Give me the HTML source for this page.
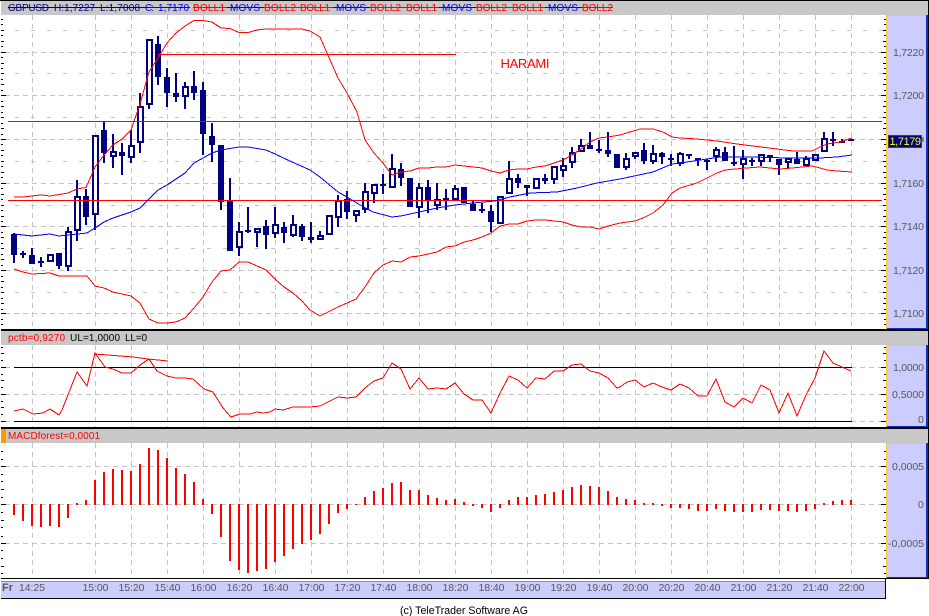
<!DOCTYPE html>
<html lang="en"><head><meta charset="utf-8"><title>GBPUSD chart</title>
<style>
html,body{margin:0;padding:0;background:#fff;width:929px;height:616px;overflow:hidden}
svg{display:block}
text{font-family:"Liberation Sans",Arial,sans-serif}
</style></head><body>
<svg xmlns="http://www.w3.org/2000/svg" width="929" height="616" viewBox="0 0 929 616">
<g shape-rendering="crispEdges">
<rect x="0" y="0" width="929" height="616" fill="#fff"/>
<!-- frames -->
<rect x="0" y="0" width="929" height="1" fill="#000"/>
<rect x="1" y="1" width="927" height="14" fill="#c8c8c8"/>
<rect x="1" y="329" width="927" height="2" fill="#000"/>
<rect x="1" y="331" width="927" height="14" fill="#c8c8c8"/>
<rect x="1" y="427" width="927" height="2" fill="#000"/>
<rect x="1" y="429" width="927" height="14" fill="#c8c8c8"/>
<rect x="1" y="429" width="5" height="14" fill="#ff9900"/>
<rect x="1" y="578" width="928" height="1" fill="#000"/>
<rect x="1" y="581" width="885" height="1" fill="#8888a0"/>
<rect x="1" y="582" width="884" height="16" fill="#ccccff"/>
<rect x="1" y="598" width="885" height="1" fill="#000"/>
<rect x="885" y="579" width="1" height="20" fill="#000"/>
<rect x="928" y="0" width="1" height="579" fill="#000"/>
<!-- right axis panels -->
<rect x="886" y="15" width="41" height="314" fill="#ccccff"/>
<rect x="886" y="345" width="41" height="82" fill="#ccccff"/>
<rect x="886" y="443" width="41" height="135" fill="#ccccff"/>
<path fill="#ffc832" d="M886 15h41v1h-41zM886 15h1v314h-1zM886 345h41v1h-41zM886 345h1v82h-1zM886 443h41v1h-41zM886 443h1v135h-1z"/>
<path fill="#1030c0" d="M926 15h2v314h-2zM887 328h41v1h-41zM926 345h2v82h-2zM887 426h41v1h-41zM926 443h2v135h-2zM887 577h41v1h-41z"/>
<!-- grid -->
<path fill="none" stroke="#c4c4c4" stroke-dasharray="5 4" d="M32.5 15V329M95.5 15V329M131.5 15V329M167.5 15V329M203.5 15V329M239.5 15V329M275.5 15V329M311.5 15V329M347.5 15V329M383.5 15V329M419.5 15V329M455.5 15V329M491.5 15V329M527.5 15V329M563.5 15V329M599.5 15V329M635.5 15V329M671.5 15V329M707.5 15V329M743.5 15V329M779.5 15V329M815.5 15V329M851.5 15V329M32.5 345V427M95.5 345V427M131.5 345V427M167.5 345V427M203.5 345V427M239.5 345V427M275.5 345V427M311.5 345V427M347.5 345V427M383.5 345V427M419.5 345V427M455.5 345V427M491.5 345V427M527.5 345V427M563.5 345V427M599.5 345V427M635.5 345V427M671.5 345V427M707.5 345V427M743.5 345V427M779.5 345V427M815.5 345V427M851.5 345V427M32.5 443V578M95.5 443V578M131.5 443V578M167.5 443V578M203.5 443V578M239.5 443V578M275.5 443V578M311.5 443V578M347.5 443V578M383.5 443V578M419.5 443V578M455.5 443V578M491.5 443V578M527.5 443V578M563.5 443V578M599.5 443V578M635.5 443V578M671.5 443V578M707.5 443V578M743.5 443V578M779.5 443V578M815.5 443V578M851.5 443V578"/>
<path fill="none" stroke="#c4c4c4" stroke-dasharray="5 4" d="M5 52.5H886M5 95.5H886M5 139.5H886M5 183.5H886M5 226.5H886M5 270.5H886M5 313.5H886M5 367.5H886M5 394.5H886M5 421.5H886M5 466.5H886M5 504.5H886M5 543.5H886"/>
<path fill="none" stroke="#c4c4c4" stroke-dasharray="4 12" d="M15 30.5H886M15 73.5H886M15 117.5H886M15 161.5H886M15 205.5H886M15 248.5H886M15 292.5H886"/>
<!-- ticks -->
<g id="t" fill="none" stroke="#000">
<path d="M1 19.5h2M1 24.5h2M1 35.5h2M1 46.5h2M1 57.5h2M1 68.5h2M1 79.5h2M1 90.5h2M1 101.5h2M1 112.5h2M1 123.5h2M1 134.5h2M1 144.5h2M1 155.5h2M1 166.5h2M1 177.5h2M1 188.5h2M1 199.5h2M1 210.5h2M1 221.5h2M1 232.5h2M1 243.5h2M1 254.5h2M1 265.5h2M1 276.5h2M1 287.5h2M1 298.5h2M1 309.5h2M1 319.5h2M1 324.5h2M1 347.5h2M1 360.5h2M1 374.5h2M1 387.5h2M1 401.5h2M1 414.5h2M1 451.5h2M1 459.5h2M1 474.5h2M1 481.5h2M1 497.5h2M1 512.5h2M1 527.5h2M1 536.5h2M1 550.5h2M1 558.5h2M1 573.5h2"/>
<path d="M1 30.5h3M1 41.5h3M1 63.5h3M1 73.5h3M1 84.5h3M1 106.5h3M1 117.5h3M1 128.5h3M1 150.5h3M1 161.5h3M1 172.5h3M1 194.5h3M1 205.5h3M1 216.5h3M1 237.5h3M1 248.5h3M1 259.5h3M1 281.5h3M1 292.5h3M1 303.5h3M1 353.5h3M1 380.5h3M1 407.5h3M1 489.5h3M1 520.5h3M1 566.5h3"/>
<path d="M1 52.5h5M1 95.5h5M1 139.5h5M1 183.5h5M1 226.5h5M1 270.5h5M1 313.5h5M1 367.5h5M1 394.5h5M1 421.5h5M1 466.5h5M1 504.5h5M1 543.5h5"/>
</g>
<use href="#t" transform="translate(887,0) scale(-1,1)"/>
<!-- candles -->
<path fill="#000080" d="M13 233h2V263h-2zM22 251h2V258h-2zM31 248h2V264h-2zM40 257h2V267h-2zM58 253h2V269h-2zM67 227h2V271h-2zM76 180h2V241h-2zM85 189h2V225h-2zM94 135h2V230h-2zM103 122h2V163h-2zM112 134h2V168h-2zM121 143h2V175h-2zM130 130h2V163h-2zM139 93h2V153h-2zM148 39h2V109h-2zM157 36h2V85h-2zM166 68h2V107h-2zM175 73h2V102h-2zM184 82h2V109h-2zM193 71h2V100h-2zM202 82h2V155h-2zM211 123h2V162h-2zM220 145h2V210h-2zM229 178h2V251h-2zM238 222h2V256h-2zM247 207h2V233h-2zM256 228h2V247h-2zM265 220h2V249h-2zM274 207h2V238h-2zM283 222h2V243h-2zM292 215h2V237h-2zM301 224h2V241h-2zM310 222h2V243h-2zM319 231h2V240h-2zM337 195h2V227h-2zM346 191h2V219h-2zM355 210h2V222h-2zM364 183h2V213h-2zM373 184h2V203h-2zM382 174h2V194h-2zM391 154h2V188h-2zM400 163h2V186h-2zM418 183h2V218h-2zM427 180h2V213h-2zM436 183h2V210h-2zM445 189h2V210h-2zM454 185h2V200h-2zM472 200h2V211h-2zM481 203h2V213h-2zM490 205h2V232h-2zM508 161h2V194h-2zM517 174h2V188h-2zM526 185h2V196h-2zM544 174h2V184h-2zM553 166h2V184h-2zM562 158h2V177h-2zM571 147h2V168h-2zM580 139h2V152h-2zM589 132h2V149h-2zM598 140h2V153h-2zM607 132h2V157h-2zM625 153h2V170h-2zM634 152h2V159h-2zM643 143h2V164h-2zM652 145h2V164h-2zM661 152h2V164h-2zM670 154h2V166h-2zM679 152h2V166h-2zM688 154h2V159h-2zM697 158h2V166h-2zM706 159h2V170h-2zM715 147h2V162h-2zM724 147h2V161h-2zM733 146h2V166h-2zM742 150h2V179h-2zM751 158h2V166h-2zM760 154h2V166h-2zM769 155h2V162h-2zM778 159h2V175h-2zM787 158h2V168h-2zM796 152h2V164h-2zM805 156h2V166h-2zM823 132h2V152h-2zM832 132h2V146h-2zM841 139h2V143h-2z"/>
<path fill="#000080" d="M11 234h6V255h-6zM20 253h6V255h-6zM29 255h6V264h-6zM38 261h6V263h-6zM56 253h6V266h-6zM83 196h6V217h-6zM101 130h6V153h-6zM119 152h6V156h-6zM155 44h6V77h-6zM164 77h6V93h-6zM173 93h6V97h-6zM191 86h6V93h-6zM200 90h6V134h-6zM209 136h6V145h-6zM218 145h6V202h-6zM227 201h6V251h-6zM245 230h6V232h-6zM263 226h6V235h-6zM281 227h6V233h-6zM299 226h6V237h-6zM308 237h6V240h-6zM344 199h6V212h-6zM380 184h6V186h-6zM398 169h6V178h-6zM407 178h6V207h-6zM425 187h6V201h-6zM443 198h6V200h-6zM461 187h6V203h-6zM470 204h6V211h-6zM479 209h6V211h-6zM488 211h6V222h-6zM515 178h6V183h-6zM524 185h6V188h-6zM542 178h6V181h-6zM587 145h6V149h-6zM596 149h6V151h-6zM605 150h6V154h-6zM614 154h6V168h-6zM641 150h6V161h-6zM659 153h6V157h-6zM668 158h6V160h-6zM686 154h6V156h-6zM695 158h6V160h-6zM704 160h6V162h-6zM722 152h6V161h-6zM731 162h6V164h-6zM749 160h6V162h-6zM767 155h6V157h-6zM776 159h6V165h-6zM794 159h6V164h-6zM830 139h6V141h-6zM839 141h6V143h-6zM848 139h6V141h-6z"/>
<path fill="#000080" d="M47 254h7V262h-7zM65 231h7V267h-7zM74 196h7V231h-7zM92 135h7V215h-7zM110 151h7V157h-7zM128 145h7V158h-7zM137 106h7V143h-7zM146 39h7V105h-7zM182 86h7V97h-7zM236 231h7V248h-7zM254 228h7V233h-7zM272 224h7V234h-7zM290 224h7V236h-7zM317 235h7V240h-7zM326 215h7V235h-7zM335 200h7V218h-7zM353 210h7V216h-7zM362 191h7V210h-7zM371 184h7V194h-7zM389 168h7V188h-7zM416 187h7V208h-7zM434 199h7V206h-7zM452 188h7V200h-7zM497 196h7V224h-7zM506 178h7V194h-7zM533 178h7V189h-7zM551 166h7V180h-7zM560 165h7V171h-7zM569 152h7V163h-7zM578 145h7V152h-7zM623 158h7V168h-7zM632 152h7V157h-7zM650 153h7V162h-7zM677 153h7V164h-7zM713 149h7V157h-7zM740 158h7V165h-7zM758 154h7V162h-7zM785 158h7V163h-7zM803 158h7V166h-7zM812 154h7V161h-7zM821 138h7V152h-7z"/>
<path fill="#fff" d="M49 256h3V260h-3zM67 233h3V265h-3zM76 198h3V229h-3zM94 137h3V213h-3zM112 153h3V155h-3zM130 147h3V156h-3zM139 108h3V141h-3zM148 41h3V103h-3zM184 88h3V95h-3zM238 233h3V246h-3zM256 230h3V231h-3zM274 226h3V232h-3zM292 226h3V234h-3zM319 237h3V238h-3zM328 217h3V233h-3zM337 202h3V216h-3zM355 212h3V214h-3zM364 193h3V208h-3zM373 186h3V192h-3zM391 170h3V186h-3zM418 189h3V206h-3zM436 201h3V204h-3zM454 190h3V198h-3zM499 198h3V222h-3zM508 180h3V192h-3zM535 180h3V187h-3zM553 168h3V178h-3zM562 167h3V169h-3zM571 154h3V161h-3zM580 147h3V150h-3zM625 160h3V166h-3zM634 154h3V155h-3zM652 155h3V160h-3zM679 155h3V162h-3zM715 151h3V155h-3zM742 160h3V163h-3zM760 156h3V160h-3zM787 160h3V161h-3zM805 160h3V164h-3zM814 156h3V159h-3zM823 140h3V150h-3z"/>
<!-- price lines -->
<path fill="#f00" d="M8 121h874v1H8zM8 200h874v1H8zM158 54h298v1H158z"/>
<!-- indicators -->
<polyline fill="none" stroke="#f00" points="14,197 23,197 32,196 41,195 50,196 59,194.5 68,193 77,189 86,187.5 95,167 104,155 113,145 122,139 131,130 140,104 149,72 158,58 167,43 176,33 185,26 194,20.5 203,20.5 212,22 221,28 230,28.5 239,32.5 248,32.5 257,30 266,29 302,29 310,31 320,37 327,53 338,78 347,93 357,112 365,140 374,153 383,163 392,175 401,172 410,171 419,168 428,168 437,167 446,167 455,165 464,166 473,167 482,168 491,171 500,173 509,170 518,169 527,169 536,167 545,166 554,163 563,160 572,155 581,149 590,142 599,138 608,137 620,135 630,132 640,129 653,129 663,132 672,137 680,138 697,139 717,141 737,144 753,146 777,149 793,151 812,151 820,147 827,144 840,142 852,138"/>
<polyline fill="none" stroke="#f00" points="14,269 23,272 32,274 50,273 59,276 68,276 87,276 95,286 104,288 113,292 122,294 131,296 140,303 149,319 158,323 167,323 176,322 185,318 194,308 203,297 212,282 221,271 230,270 239,262 248,262 257,266 266,270 275,279 284,287 293,293 302,301 310,310 320,316 338,307 347,303 356,299 365,287 374,273 383,265 392,261 401,262 410,257 419,256 428,254 437,252 446,247 455,246 464,242 473,240 482,237 491,233 500,226 509,224 518,224 527,221 536,220 545,220 554,221 563,222 572,225 581,227 590,227 599,229 608,226 620,223 635,221 643,218 653,213 663,205 672,193 680,188 697,183 707,178 717,173 725,170 735,169 747,168 760,167 780,169 792,168 812,166 820,168 827,170 837,171 852,172"/>
<polyline fill="none" stroke="#00f" points="14,234 32,236 50,234 59,236 68,235 87,233 95,228 104,222 113,218 131,212 140,208 143,205 158,190 167,185 185,173 194,163 212,153 221,150 239,147 248,147 266,150 275,154 290,161 310,170 320,177 338,192 347,197 360,205 373,212 392,217 401,216 419,212 437,208 455,205 473,203 495,201 510,197 530,193 557,192 577,188 597,183 620,179 653,172 672,164 687,162 720,157 753,157 787,158 820,158 837,157 852,155"/>
<!-- pctb -->
<path fill="#000" d="M14 367h838v1H14zM14 421h838v1H14z"/>
<polyline fill="none" stroke="#f00" points="14,411 23,409 33,414 43,413 50,409 59,415 62,410 77,372 87,386 95,353 105,367 113,369 122,373 131,373 140,365 149,359 157,371 167,376 176,378 185,378 193,379 204,389 213,392 223,408 231,417 240,414 250,414 257,412 263,413 270,412 275,409 283,410 293,407 310,407 320,406 338,397 347,398 356,397 365,388 374,381 383,378 392,363 401,369 410,389 419,378 428,389 437,388 446,389 455,383 464,394 473,400 482,400 491,413 500,393 509,376 518,380 527,388 536,378 545,379 554,371 563,371 572,365 581,364 590,371 599,373 608,378 617,388 620,387 627,382 635,380 644,387 653,383 662,387 671,390 680,384 689,388 698,396 707,396 716,379 725,402 734,407 743,398 752,403 761,385 770,390 779,413 788,393 797,416 806,395 815,378 824,351 833,363 842,367 851,371"/>
<polyline fill="none" stroke="#f00" points="95,354 133,357 148,359 168,361"/>
<!-- MACD -->
<path fill="#f00" d="M13 504h2V515h-2zM22 504h2V521h-2zM31 504h2V526h-2zM40 504h2V527h-2zM49 504h2V526h-2zM58 504h2V527h-2zM67 504h2V518h-2zM76 503h2V505h-2zM85 500h2V505h-2zM94 480h2V505h-2zM103 472h2V505h-2zM112 469h2V505h-2zM121 470h2V505h-2zM130 471h2V505h-2zM139 464h2V505h-2zM148 448h2V505h-2zM157 450h2V505h-2zM166 458h2V505h-2zM175 468h2V505h-2zM184 474h2V505h-2zM193 482h2V505h-2zM202 499h2V505h-2zM211 504h2V514h-2zM220 504h2V537h-2zM229 504h2V561h-2zM238 504h2V570h-2zM247 504h2V573h-2zM256 504h2V571h-2zM265 504h2V569h-2zM274 504h2V562h-2zM283 504h2V556h-2zM292 504h2V549h-2zM301 504h2V544h-2zM310 504h2V540h-2zM319 504h2V534h-2zM328 504h2V524h-2zM337 504h2V513h-2zM346 504h2V509h-2zM355 504h2V505h-2zM364 497h2V505h-2zM373 491h2V505h-2zM382 488h2V505h-2zM391 483h2V505h-2zM400 482h2V505h-2zM409 490h2V505h-2zM418 490h2V505h-2zM427 495h2V505h-2zM436 498h2V505h-2zM445 500h2V505h-2zM454 499h2V505h-2zM463 502h2V505h-2zM472 504h2V506h-2zM481 504h2V508h-2zM490 504h2V512h-2zM499 504h2V508h-2zM508 500h2V505h-2zM517 497h2V505h-2zM526 497h2V505h-2zM535 495h2V505h-2zM544 494h2V505h-2zM553 492h2V505h-2zM562 490h2V505h-2zM571 487h2V505h-2zM580 485h2V505h-2zM589 486h2V505h-2zM598 487h2V505h-2zM607 491h2V505h-2zM616 497h2V505h-2zM625 499h2V505h-2zM634 500h2V505h-2zM643 503h2V505h-2zM652 503h2V505h-2zM661 504h2V506h-2zM670 504h2V508h-2zM679 504h2V508h-2zM688 504h2V509h-2zM697 504h2V511h-2zM706 504h2V511h-2zM715 504h2V509h-2zM724 504h2V511h-2zM733 504h2V512h-2zM742 504h2V512h-2zM751 504h2V512h-2zM760 504h2V510h-2zM769 504h2V510h-2zM778 504h2V511h-2zM787 504h2V511h-2zM796 504h2V512h-2zM805 504h2V511h-2zM814 504h2V509h-2zM823 503h2V505h-2zM832 501h2V505h-2zM841 500h2V505h-2zM850 500h2V505h-2z"/>
<!-- header strike -->
<path fill="#000080" d="M8 7h137v1H8z"/>
<path fill="#00f" d="M145 7h45v1h-45zM227 7h37v1h-37zM333 7h37v1h-37zM439 7h37v1h-37zM545 7h37v1h-37z"/>
<path fill="#f00" d="M193 7h34v1h-34zM264 7h69v1h-69zM370 7h69v1h-69zM476 7h69v1h-69zM582 7h31v1h-31z"/>
<!-- price tag -->
<rect x="922" y="137" width="2" height="5" fill="#808080"/>
<rect x="888" y="135" width="34" height="13" fill="#404040"/>
<rect x="889" y="136" width="32" height="11" fill="#000080"/>
</g>
<g font-size="10">
<text x="8" y="11" fill="#000080" textLength="41" lengthAdjust="spacing">GBPUSD</text>
<text x="54" y="11" fill="#000080" textLength="41" lengthAdjust="spacing">H:1,7227</text>
<text x="100" y="11" fill="#000080" textLength="40" lengthAdjust="spacing">L:1,7008</text>
<text x="145" y="11" fill="#00f" textLength="9" lengthAdjust="spacing">C:</text>
<text x="158" y="11" fill="#00f" textLength="31" lengthAdjust="spacing">1,7170</text>
<g fill="#f00">
<text x="193" y="11" textLength="32" lengthAdjust="spacing">BOLL1</text>
<text x="264" y="11" textLength="32" lengthAdjust="spacing">BOLL2</text>
<text x="300" y="11" textLength="30" lengthAdjust="spacing">BOLL1</text>
<text x="370" y="11" textLength="31" lengthAdjust="spacing">BOLL2</text>
<text x="406" y="11" textLength="31" lengthAdjust="spacing">BOLL1</text>
<text x="476" y="11" textLength="31" lengthAdjust="spacing">BOLL2</text>
<text x="512" y="11" textLength="31" lengthAdjust="spacing">BOLL1</text>
<text x="582" y="11" textLength="31" lengthAdjust="spacing">BOLL2</text>
</g>
<g fill="#00f">
<text x="230" y="11" textLength="30" lengthAdjust="spacing">MOVS</text>
<text x="336" y="11" textLength="30" lengthAdjust="spacing">MOVS</text>
<text x="442" y="11" textLength="30" lengthAdjust="spacing">MOVS</text>
<text x="548" y="11" textLength="30" lengthAdjust="spacing">MOVS</text>
</g>
<text x="8" y="341" fill="#f00" textLength="57" lengthAdjust="spacing">pctb=0,9270</text>
<text x="70" y="341" fill="#000" textLength="50" lengthAdjust="spacing">UL=1,0000</text>
<text x="125" y="341" fill="#000" textLength="22" lengthAdjust="spacing">LL=0</text>
<text x="8" y="439" fill="#f00" textLength="92" lengthAdjust="spacing">MACDforest=0,0001</text>
</g>
<text x="500.5" y="68" font-size="13" fill="#f00" textLength="49" lengthAdjust="spacing">HARAMI</text>
<g font-size="10.5" fill="#585858">
<text x="893" y="56" textLength="31">1,7220</text>
<text x="893" y="99" textLength="31">1,7200</text>
<text x="893" y="187" textLength="31">1,7160</text>
<text x="893" y="230" textLength="31">1,7140</text>
<text x="893" y="274" textLength="31">1,7120</text>
<text x="893" y="317" textLength="31">1,7100</text>
<text x="893" y="371" textLength="31">1,0000</text>
<text x="892" y="398" textLength="32">0,5000</text>
<text x="918" y="423">0</text>
<text x="892" y="470" textLength="32">0,0005</text>
<text x="918" y="508">0</text>
<text x="888" y="547" textLength="36">-0,0005</text>
<text x="2" y="591" font-weight="bold" font-size="11">Fr</text>
<g text-anchor="middle">
<text x="32" y="591" textLength="26">14:25</text>
<text x="95.5" y="591" textLength="26">15:00</text>
<text x="131.5" y="591" textLength="26">15:20</text>
<text x="167.5" y="591" textLength="26">15:40</text>
<text x="203.5" y="591" textLength="26">16:00</text>
<text x="239.5" y="591" textLength="26">16:20</text>
<text x="275.5" y="591" textLength="26">16:40</text>
<text x="311.5" y="591" textLength="26">17:00</text>
<text x="347.5" y="591" textLength="26">17:20</text>
<text x="383.5" y="591" textLength="26">17:40</text>
<text x="419.5" y="591" textLength="26">18:00</text>
<text x="455.5" y="591" textLength="26">18:20</text>
<text x="491.5" y="591" textLength="26">18:40</text>
<text x="527.5" y="591" textLength="26">19:00</text>
<text x="563.5" y="591" textLength="26">19:20</text>
<text x="599.5" y="591" textLength="26">19:40</text>
<text x="635.5" y="591" textLength="26">20:00</text>
<text x="671.5" y="591" textLength="26">20:20</text>
<text x="707.5" y="591" textLength="26">20:40</text>
<text x="743.5" y="591" textLength="26">21:00</text>
<text x="779.5" y="591" textLength="26">21:20</text>
<text x="815.5" y="591" textLength="26">21:40</text>
<text x="851.5" y="591" textLength="26">22:00</text>
</g>
</g>
<text x="889.5" y="145" font-size="11" fill="#ffff00" textLength="31.5">1,7179</text>
<text x="400" y="614" font-size="11" fill="#000" textLength="128" lengthAdjust="spacingAndGlyphs">(c) TeleTrader Software AG</text>
</svg>
</body></html>
